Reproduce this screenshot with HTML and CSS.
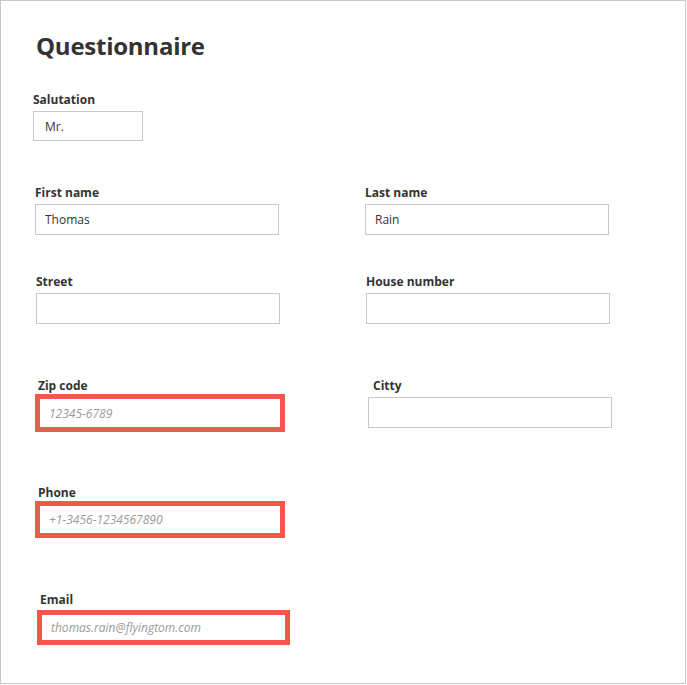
FILE: index.html
```html
<!DOCTYPE html>
<html lang="en">
<head>
  <meta charset="UTF-8">
  <meta name="viewport" content="width=device-width, initial-scale=1.0">
  <title>Questionnaire</title>
  <link rel="stylesheet" href="styles.css">
</head>
<body>

  <div class="page">
    <h1 class="title">Questionnaire</h1>

    <form class="form">
      <!-- Salutation -->
      <div class="row row-salutation">
        <div class="field field-salutation">
          <label for="salutation">Salutation</label>
          <input type="text" id="salutation" class="input input-short" value="Mr.">
        </div>
      </div>

      <!-- Name -->
      <div class="row row-name">
        <div class="field field-first">
          <label for="first-name">First name</label>
          <input type="text" id="first-name" class="input" value="Thomas">
        </div>
        <div class="field field-last">
          <label for="last-name">Last name</label>
          <input type="text" id="last-name" class="input" value="Rain">
        </div>
      </div>

      <!-- Address -->
      <div class="row row-street">
        <div class="field field-street">
          <label for="street">Street</label>
          <input type="text" id="street" class="input">
        </div>
        <div class="field field-house">
          <label for="house">House number</label>
          <input type="text" id="house" class="input">
        </div>
      </div>

      <div class="row row-zip">
        <div class="field field-zip">
          <label for="zip">Zip code</label>
          <input type="text" id="zip" class="input invalid" placeholder="12345-6789">
        </div>
        <div class="field field-city">
          <label for="city">Citty</label>
          <input type="text" id="city" class="input">
        </div>
      </div>

      <!-- Contact -->
      <div class="row row-phone">
        <div class="field field-phone">
          <label for="phone">Phone</label>
          <input type="tel" id="phone" class="input invalid" placeholder="+1-3456-1234567890">
        </div>
      </div>

      <div class="row row-email">
        <div class="field field-email">
          <label for="email">Email</label>
          <input type="email" id="email" class="input input-email invalid" placeholder="thomas.rain@flyingtom.com">
        </div>
      </div>
    </form>
  </div>

</body>
</html>
```

FILE: styles.css
```css
* {
  box-sizing: border-box;
}

body {
  margin: 0;
  padding: 0;
  background: #fff;
  font-family: 'Open Sans', 'Noto Sans', sans-serif;
  color: #333;
}

.page {
  width: 686px;
  height: 684px;
  border: 1px solid #c8c8c8;
  padding-top: 30px;
}

.title {
  margin: 0 0 0 35px;
  font-size: 24px;
  line-height: 29px;
  font-weight: 700;
  letter-spacing: -0.25px;
  color: #333;
}

.form {
  display: flex;
  flex-direction: column;
}

.row {
  display: flex;
}

.field {
  display: flex;
  flex-direction: column;
  width: 244px;
}

.field label {
  display: block;
  padding-top: 1px;
  font-size: 12px;
  line-height: 16px;
  font-weight: 700;
  color: #333;
  margin-bottom: 3px;
}

.input {
  width: 244px;
  height: 31px;
  padding: 0 9px;
  border: 1px solid #c9c9c9;
  border-radius: 0;
  font-family: inherit;
  font-size: 12px;
  color: #333;
  background: #fff;
  outline: none;
}

.input::placeholder {
  font-style: italic;
  color: #9a9a9a;
}

.input-short {
  width: 110px;
  height: 30px;
  padding: 0 11px;
}

/* red highlight around fields that need attention */
.input.invalid {
  outline: 5px solid #ec5a4b;
  outline-offset: -2px;
  padding-left: 10px;
}

.input-email {
  width: 247px;
  height: 29px;
}

/* row positions */
.row-salutation {
  margin-top: 31px;
  padding-left: 32px;
}

.row-name {
  margin-top: 43px;
}

.field-first {
  margin-left: 34px;
}

.field-last {
  margin-left: 86px;
}

.row-street {
  margin-top: 38px;
}

.field-street {
  margin-left: 35px;
}

.field-house {
  margin-left: 86px;
}

.row-zip {
  margin-top: 53px;
}

.field-zip {
  margin-left: 37px;
}

.field-zip .input {
  height: 32px;
}

.field-city {
  margin-left: 86px;
}

.field-city label {
  padding-left: 5px;
}

.row-phone {
  margin-top: 55px;
  padding-left: 37px;
}

.row-email {
  margin-top: 56px;
  padding-left: 39px;
}

.field-email label {
  margin-bottom: 5px;
}
```
